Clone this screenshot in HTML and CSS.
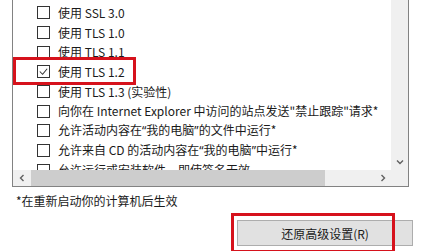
FILE: index.html
```html
<!DOCTYPE html>
<html>
<head>
<meta charset="utf-8">
<link rel="stylesheet" href="styles.css">
</head>
<body>
<div class="listbox">
  <div class="content">
    <div class="row"><span class="cb"></span><span class="label">使用 SSL 3.0</span></div>
    <div class="row"><span class="cb"></span><span class="label">使用 TLS 1.0</span></div>
    <div class="row"><span class="cb"></span><span class="label">使用 TLS 1.1</span></div>
    <div class="row marked"><span class="cb"><svg viewBox="0 0 12 12" width="11" height="11"><polyline points="2,6 5,9 10,3" fill="none" stroke="#333" stroke-width="1.1"/></svg></span><span class="label">使用 TLS 1.2</span></div>
    <div class="row"><span class="cb"></span><span class="label">使用 TLS 1.3 (实验性)</span></div>
    <div class="row"><span class="cb"></span><span class="label">向你在 Internet Explorer 中访问的站点发送"禁止跟踪"请求*</span></div>
    <div class="row"><span class="cb"></span><span class="label">允许活动内容在<span class="q">“</span>我的电脑<span class="q">”</span>的文件中运行*</span></div>
    <div class="row"><span class="cb"></span><span class="label">允许来自 CD 的活动内容在<span class="q">“</span>我的电脑<span class="q">”</span>中运行*</span></div>
    <div class="row"><span class="cb"></span><span class="label">允许运行或安装软件，即使签名无效</span></div>
  </div>
  <div class="vscroll">
    <div class="vtrack"></div>
    <div class="arrow"><svg viewBox="0 0 8 8" width="8" height="8"><polyline points="1,2.5 4,5.5 7,2.5" fill="none" stroke="#606060" stroke-width="1.4"/></svg></div>
  </div>
  <div class="hscroll">
    <div class="arrow"><svg viewBox="0 0 8 8" width="8" height="8"><polyline points="5.5,1 2.5,4 5.5,7" fill="none" stroke="#606060" stroke-width="1.4"/></svg></div>
    <div class="thumb"></div>
    <div class="htrack"></div>
    <div class="arrow"><svg viewBox="0 0 8 8" width="8" height="8"><polyline points="2.5,1 5.5,4 2.5,7" fill="none" stroke="#606060" stroke-width="1.4"/></svg></div>
  </div>
  <div class="corner"></div>
</div>
<div class="note">*在重新启动你的计算机后生效</div>
<div class="actions">
  <div class="btnwrap"><div class="btn">还原高级设置(R)</div></div>
</div>
</body>
</html>
```
FILE: styles.css
```css
html, body {
  margin: 0;
  padding: 0;
  background: #ffffff;
}
body {
  width: 421px;
  height: 251px;
  overflow: hidden;
  font-family: "Noto Sans CJK SC", "Noto Sans", sans-serif;
  font-size: 12px;
  color: #1a1a1a;
}
.listbox {
  margin-left: 12px;
  width: 395px;
  height: 186px;
  border-left: 1px solid #828282;
  border-right: 1px solid #828282;
  border-bottom: 1px solid #828282;
  display: grid;
  grid-template-columns: 1fr 17px;
  grid-template-rows: 1fr 16px;
  background: #fff;
}
.content {
  overflow: hidden;
  padding-top: 3px;
}
.row {
  height: 19.7px;
  display: flex;
  align-items: center;
  white-space: nowrap;
}
.cb {
  width: 11px;
  height: 11px;
  border: 1px solid #333;
  margin-left: 24px;
  margin-right: 8px;
  flex: none;
  display: flex;
  align-items: center;
  justify-content: center;
  background: #fff;
}
.cb svg { display: block; }
.label {
  line-height: 16px;
}
.q {
  font-family: "Noto Sans", "Liberation Sans", sans-serif;
}
.marked {
  position: relative;
}
.marked::after {
  content: "";
  position: absolute;
  left: 0;
  top: -5px;
  width: 117px;
  height: 22px;
  border: 3px solid #d6121c;
}
.vscroll {
  background: #f0f0f0;
  display: flex;
  flex-direction: column;
}
.vtrack { flex: 1; }
.arrow {
  width: 17px;
  height: 16px;
  display: flex;
  align-items: center;
  justify-content: center;
  flex: none;
}
.hscroll {
  background: #f0f0f0;
  display: flex;
}
.thumb {
  width: 294px;
  margin-left: 1px;
  background: #cdcdcd;
}
.htrack { flex: 1; }
.corner { background: #f0f0f0; }
.note {
  margin-left: 16px;
  margin-top: 4px;
  height: 20px;
  line-height: 20px;
}
.actions {
  display: flex;
  margin-top: 9px;
  padding-left: 237px;
}
.btnwrap {
  position: relative;
}
.btn {
  width: 174px;
  height: 24px;
  background: #e1e1e1;
  border: 1px solid #adadad;
  display: flex;
  align-items: center;
  justify-content: center;
  color: #1a1a1a;
}
.btnwrap::after {
  content: "";
  position: absolute;
  left: -6px;
  top: -7px;
  width: 158px;
  height: 34px;
  border: 3px solid #d6121c;
}
```
